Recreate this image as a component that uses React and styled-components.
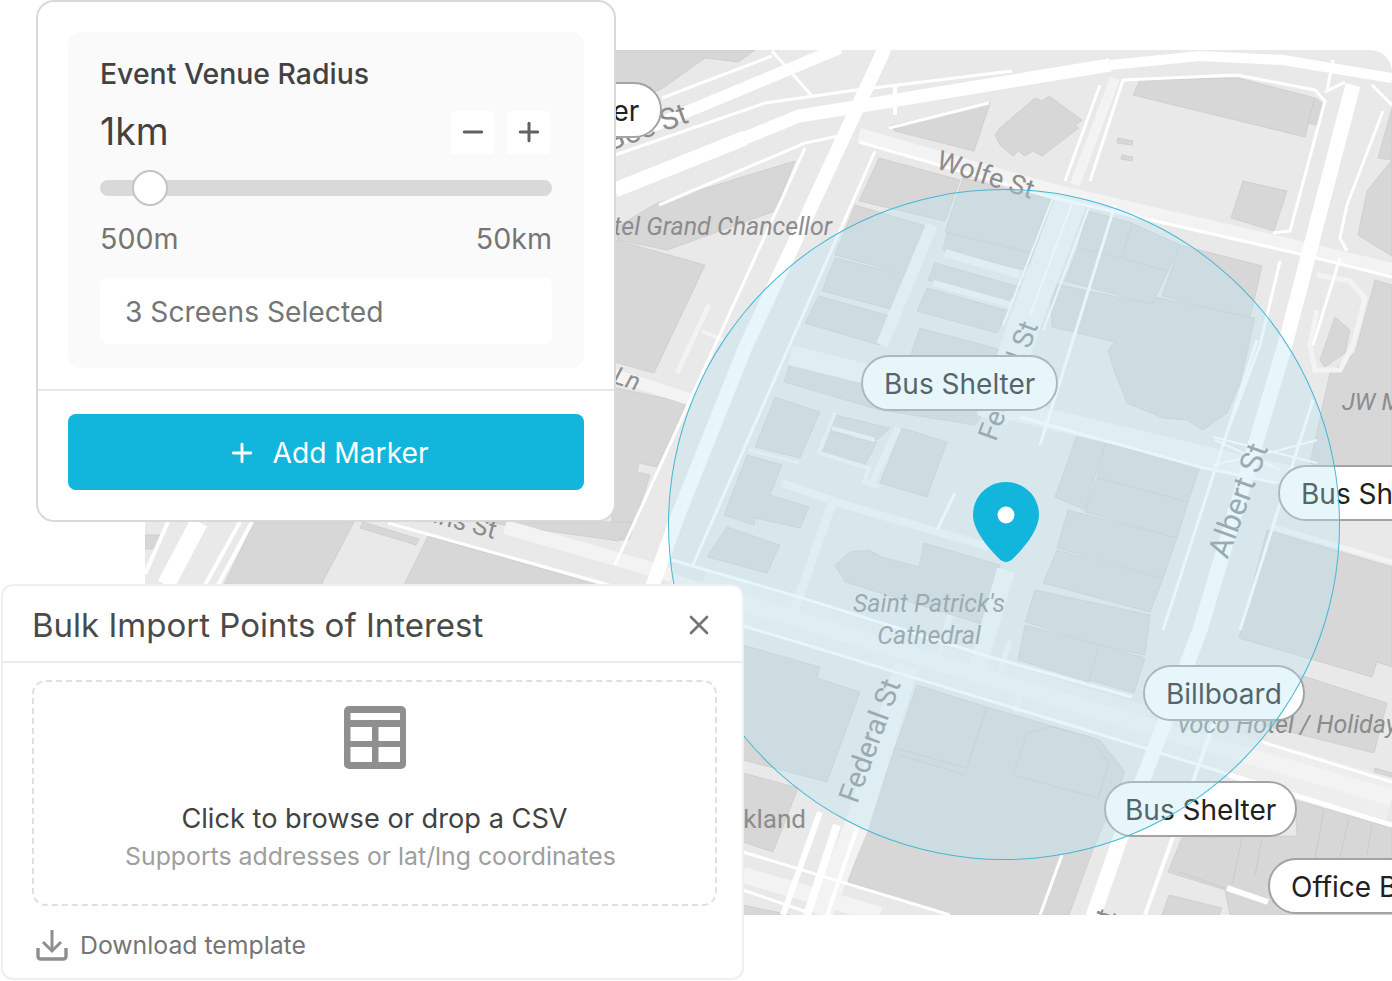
import React from "react";
import styled, { createGlobalStyle } from "styled-components";
import { Plus, Minus, X } from "lucide-react";

const Global = createGlobalStyle`
  html, body { margin: 0; padding: 0; background: #fff; }
  body { font-family: "Inter", "Liberation Sans", sans-serif; overflow: hidden; }
  * { box-sizing: border-box; }
`;

const Stage = styled.div`
  position: relative;
  width: 1392px;
  height: 981px;
  overflow: hidden;
  background: #fff;
`;

const MapImage = styled.svg`
  position: absolute;
  left: 145px;
  top: 50px;
  width: 1247px;
  height: 865px;
  border-top-right-radius: 22px;
`;

const Pill = styled.div`
  position: absolute;
  left: ${(p) => p.$x}px;
  top: ${(p) => p.$y}px;
  height: 56px;
  padding: 2px ${(p) => p.$pad || 21}px 0;
  display: flex;
  align-items: center;
  white-space: nowrap;
  background: #fff;
  border: 2px solid #a3a3a3;
  border-radius: 28px;
  font-size: 28px;
  color: #212121;
`;

const Radius = styled.div`
  position: absolute;
  left: 668px;
  top: 189px;
  width: 672px;
  height: 671px;
  border-radius: 50%;
  border: 1.6px solid #45b8d6;
  background: rgba(184, 229, 243, 0.35);
`;

const PinIcon = styled.svg`
  position: absolute;
  left: 973px;
  top: 482px;
  width: 66px;
  height: 80px;
`;

const VenueCard = styled.section`
  position: absolute;
  left: 36px;
  top: 0;
  width: 580px;
  height: 522px;
  background: #fff;
  border: 2px solid #d9d9d9;
  border-radius: 18px;
  display: flex;
  flex-direction: column;
`;

const VenuePanel = styled.div`
  margin: 30px 30px 0;
  height: 336px;
  padding: 24px 32px 0;
  background: #fafafa;
  border-radius: 12px;
  display: flex;
  flex-direction: column;
`;

const PanelTitle = styled.div`
  font-size: 28.4px;
  line-height: 36px;
  font-weight: 500;
  color: #424242;
`;

const ValueRow = styled.div`
  margin-top: 18px;
  height: 44px;
  display: flex;
  align-items: center;
  justify-content: space-between;
`;

const Value = styled.div`
  font-size: 37.5px;
  line-height: 44px;
  color: #424242;
`;

const Stepper = styled.div`
  display: flex;
  gap: 13px;
  margin-right: 2px;
`;

const StepButton = styled.button`
  width: 43px;
  height: 43px;
  padding: 0;
  border: 0;
  border-radius: 4px;
  background: #fff;
  color: #616161;
  display: flex;
  align-items: center;
  justify-content: center;
`;

const Track = styled.div`
  position: relative;
  margin-top: 26px;
  height: 16px;
  border-radius: 8px;
  background: #d9d9d9;
`;

const Thumb = styled.div`
  position: absolute;
  left: 32px;
  top: -10px;
  width: 36px;
  height: 36px;
  border-radius: 50%;
  background: #fff;
  border: 2px solid #c4c4c4;
`;

const RangeLabels = styled.div`
  margin-top: 25px;
  display: flex;
  justify-content: space-between;
  font-size: 28.6px;
  line-height: 36px;
  color: #757575;
`;

const SelectedBox = styled.div`
  margin-top: 21px;
  height: 66px;
  padding: 2px 0 0 25px;
  display: flex;
  align-items: center;
  background: #fff;
  border-radius: 8px;
  font-size: 28.2px;
  color: #757575;
`;

const VenueFooter = styled.div`
  margin-top: 21px;
  padding: 23px 30px 0;
  border-top: 2px solid #e8e8e8;
`;

const AddButton = styled.button`
  width: 100%;
  height: 76px;
  padding: 2px 0 0 4px;
  border: 0;
  border-radius: 8px;
  background: #12b5db;
  color: #fff;
  font-family: inherit;
  font-size: 28.2px;
  display: flex;
  align-items: center;
  justify-content: center;
  gap: 15px;
`;

const ImportCard = styled.section`
  position: absolute;
  left: 1px;
  top: 584px;
  width: 743px;
  height: 396px;
  background: #fff;
  border: 2px solid #efefef;
  border-radius: 12px;
  display: flex;
  flex-direction: column;
`;

const ImportHeader = styled.header`
  height: 77px;
  padding: 3px 27px 0 29px;
  display: flex;
  align-items: center;
  justify-content: space-between;
  border-bottom: 2px solid #ececec;
  font-size: 33px;
  color: #4a4a4a;
`;

const CloseButton = styled.span`
  display: flex;
  color: #757575;
`;

const DropZone = styled.div`
  margin: 17px 25px 0 29px;
  height: 226px;
  border: 2px dashed #e0e0e0;
  border-radius: 14px;
  padding-top: 24px;
  display: flex;
  flex-direction: column;
  align-items: center;
`;

const DropTitle = styled.div`
  margin-top: 31px;
  font-size: 27.2px;
  line-height: 38px;
  color: #424242;
`;

const DropHint = styled.div`
  font-size: 24.8px;
  line-height: 36px;
  color: #9e9e9e;
  transform: translateX(-4px);
`;

const TemplateLink = styled.div`
  margin: 22px 0 0 33px;
  display: flex;
  align-items: center;
  gap: 12px;
  font-size: 24.8px;
  line-height: 34px;
  color: #757575;
`;

const buildings = [
  "615,50 755,50 738,62 705,58 660,90 615,105",
  "795,161 775,211 667,250 618,240 615,228 657,203",
  "615,240 705,265 654,373 615,362",
  "612,387 687,403 657,467 639,463 637,472 650,475 629,540 612,540",
  "890,126 990,103 974,151 895,131",
  "879,158 960,180 945,221 859,201",
  "855,205 932,228 909,275 835,255",
  "835,258 909,276 895,310 822,291",
  "819,296 890,316 879,345 805,323",
  "963,178 1055,200 1035,253 945,232",
  "947,233 1035,254 1025,270 943,250",
  "935,263 1020,287 1008,302 928,280",
  "927,288 1009,311 997,333 917,311",
  "920,328 1002,350 985,390 908,362",
  "792,357 872,377 985,410 975,425 880,410 784,382",
  "775,397 820,412 800,458 755,447",
  "835,415 890,428 877,440 825,432",
  "825,433 877,442 865,465 820,452",
  "902,428 947,442 927,497 880,483",
  "747,455 782,465 770,495 809,507 800,528 755,518 754,525 724,515",
  "727,527 780,545 767,573 707,557",
  "850,552 869,550 882,557 919,567 924,543 1000,565 985,625 845,582 835,565",
  "1000,128 1035,98 1042,101 1049,96 1082,120 1075,126 1079,128 1042,156 1033,151 1025,156 1018,151 1013,156 1000,145 995,135",
  "1133,95 1140,80 1238,78 1315,98 1305,137",
  "1315,98 1325,105 1318,125 1308,123",
  "1118,138 1133,141 1132,145 1117,143",
  "1122,155 1133,157 1132,161 1121,159",
  "1243,181 1287,191 1274,231 1231,218",
  "1392,108 1378,158 1392,160",
  "1392,160 1367,191 1358,235 1392,256",
  "1375,280 1355,353 1330,373 1310,463 1392,490 1392,285",
  "1335,317 1350,330 1345,353 1325,367 1320,360",
  "1180,245 1262,266 1250,318 1162,296",
  "1088,211 1132,223 1122,258 1078,247",
  "1132,223 1180,245 1168,271 1122,258",
  "1078,248 1168,271 1152,304 1065,281",
  "1050,283 1152,304 1155,297 1255,318 1240,383 1227,413 1203,430 1187,420 1163,418 1127,403 1115,373 1108,350 1115,342 1052,327",
  "1077,435 1105,443 1085,510 1055,497",
  "1105,443 1200,467 1188,502 1097,477",
  "1097,478 1188,502 1177,538 1085,512",
  "1068,510 1177,538 1163,578 1057,548",
  "1057,550 1163,579 1150,612 1043,583",
  "1035,590 1150,615 1145,655 1099,645 1025,622",
  "1025,625 1099,645 1089,682 1018,660",
  "1099,645 1145,658 1134,693 1089,680",
  "1267,530 1392,567 1392,667 1377,662 1372,677 1239,638",
  "1300,675 1387,703 1374,753 1262,725",
  "1375,768 1392,773 1392,790 1370,785",
  "743,645 820,667 817,678 860,692 827,782 743,760",
  "743,773 798,788 773,852 743,842",
  "917,685 987,707 1100,740 1125,772 1092,852 1069,915 950,915 848,882 895,748",
  "1182,838 1297,836 1295,800 1392,828 1392,915 1230,915 1225,890 1168,872",
  "1169,895 1222,908 1219,915 1162,915",
  "743,905 790,915 743,915",
  "254,522 354,522 321,585 224,585",
  "428,536 598,585 404,585",
  "485,522 619,541 633,522",
  "363,522 419,539 416,545 360,528",
  "145,535 162,535 156,549 145,549",
];

// thin walls inside the large blocks
const outlines = [
  "M1027,733 L1052,727 L1090,737 L1109,763 L1098,798 L1013,775 Z",
  "M895,748 L967,768 L987,707",
  "M900,755 L965,775",
  "M1242,838 L1232,885",
  "M1262,838 L1255,875",
  "M1324,810 L1315,858",
  "M1349,818 L1340,857",
  "M1372,825 L1367,855",
  "M1179,872 L1225,888",
];

const bands = [
  { d: "M859,135 L1050,190 L1300,248 L1392,270", w: 14 },
  { d: "M1115,78 L1075,185", w: 10 },
  { d: "M1071,200 L1023,328 L992,420", w: 32 },
  { d: "M932,225 L882,345", w: 12 },
  { d: "M898,428 L872,483", w: 7 },
  { d: "M832,503 L792,617", w: 9 },
  { d: "M1006,570 L977,670", w: 18 },
  { d: "M790,355 L1020,412 L1213,458 L1317,482", w: 20 },
  { d: "M782,483 L839,503 L989,547", w: 8 },
  { d: "M615,375 L692,400", w: 12 },
  { d: "M709,305 L677,373", w: 5 },
  { d: "M702,331 L725,341", w: 4 },
  { d: "M505,527 L672,575", w: 14 },
  { d: "M672,582 L800,620 L1070,703 L1392,798", w: 16 },
  { d: "M907,665 L857,825 L820,915", w: 24 },
  { d: "M743,875 L830,900 L880,915", w: 16 },
  { d: "M1273,527 L1392,562", w: 5 },
  { d: "M945,253 L1020,275", w: 8 },
  { d: "M933,283 L1012,305", w: 6 },
  { d: "M1317,275 L1350,281 L1365,298 L1353,345 L1340,370 L1315,370 L1310,345 L1317,310", w: 5 },
  { d: "M835,412 L819,453 L869,468 L864,482 L879,487", w: 4 },
  { d: "M832,428 L875,440", w: 4 },
  { d: "M749,450 L799,463", w: 3 },
  { d: "M898,428 L872,483", w: 5 },
  { d: "M1010,640 L1000,672", w: 5 },
  { d: "M950,615 L940,655", w: 6 },
  { d: "M1022,690 L1015,712", w: 5 },
];

const whiteRoads = [
  { d: "M600,148 L840,48", w: 12 },
  { d: "M615,190 L745,138", w: 15 },
  { d: "M745,138 L799,116 L849,108 L1000,83 L1110,65", w: 13 },
  { d: "M1110,65 L1200,56 L1283,60 L1392,78", w: 10 },
  { d: "M885,48 L792,248 L745,348 L679,513 L640,620", w: 14 },
  { d: "M1353,85 L1285,345 L1200,630 L1119,842 L1090,925", w: 15 },
  { d: "M1257,340 L1163,630", w: 3 },
  { d: "M1313,400 L1240,630", w: 3 },
  { d: "M168,522 L145,574", w: 4 },
  { d: "M199,522 L166,585", w: 18 },
  { d: "M240,522 L205,585", w: 4 },
  { d: "M252,522 L218,585", w: 4 },
  { d: "M875,151 L692,567", w: 3 },
  { d: "M805,148 L615,565", w: 3 },
  { d: "M615,155 L765,103 L849,91 L1012,71", w: 3 },
  { d: "M662,98 L772,56", w: 3 },
  { d: "M659,205 L805,143 L839,136", w: 3 },
  { d: "M772,51 L812,96", w: 3 },
  { d: "M895,85 L895,115", w: 4 },
  { d: "M889,128 L989,103", w: 3 },
  { d: "M1090,181 L1123,80 L1237,75 L1315,90 L1325,101 L1290,231 L1273,233", w: 3 },
  { d: "M1100,85 L1065,181", w: 3 },
  { d: "M1280,261 L1260,345 L1228,430", w: 3 },
  { d: "M1383,111 L1347,205 L1340,238 L1347,251", w: 3 },
  { d: "M1340,258 L1313,345", w: 3 },
  { d: "M859,142 L1050,197 L1300,254 L1392,277", w: 3 },
  { d: "M1053,198 L1003,325", w: 2 },
  { d: "M1073,201 L1030,315", w: 2 },
  { d: "M1090,205 L1043,331", w: 2 },
  { d: "M1020,417 L1200,467 L1277,483", w: 3 },
  { d: "M1213,437 L1317,463", w: 2 },
  { d: "M1213,465 L1280,450 L1317,440", w: 2 },
  { d: "M1215,440 L1280,470", w: 2 },
  { d: "M388,523 L602,583 L1070,725 L1392,825", w: 3 },
  { d: "M672,560 L799,597 L990,657 L1132,697", w: 3 },
  { d: "M1229,775 L1392,825", w: 5 },
  { d: "M1262,742 L1392,782", w: 3 },
  { d: "M743,852 L950,915", w: 3 },
  { d: "M743,890 L807,912", w: 3 },
  { d: "M1227,888 L1268,902", w: 6 },
  { d: "M1145,915 L1215,720", w: 4 },
  { d: "M1062,855 L1040,915", w: 3 },
  { d: "M820,812 L783,915", w: 6 },
  { d: "M837,825 L807,915", w: 8 },
  { d: "M857,828 L827,915", w: 4 },
  { d: "M1115,205 L1062,375 L1040,445", w: 3 },
  { d: "M937,530 L955,493", w: 3 },
  { d: "M1333,60 L1327,91", w: 3 },
  { d: "M1325,92 L1345,82", w: 3 },
  { d: "M1372,85 L1392,105", w: 3 },
];

const labels = [
  { text: "Wolfe St", x: 935, y: 168, size: 27, rotate: 18 },
  { text: "Hotel Grand Chancellor", x: 832, y: 235, size: 25, anchor: "end", italic: true },
  { text: "Federal St", x: 1017, y: 384, size: 28, rotate: -70, anchor: "middle" },
  { text: "Federal St", x: 879, y: 744, size: 29, rotate: -70, anchor: "middle" },
  { text: "Albert St", x: 1248, y: 504, size: 31, rotate: -70, anchor: "middle" },
  { text: "Saint Patrick's", x: 929, y: 612, size: 25, anchor: "middle", italic: true },
  { text: "Cathedral", x: 929, y: 644, size: 25, anchor: "middle", italic: true },
  { text: "Flinders Ln", x: 637, y: 391, size: 25, rotate: 18, anchor: "end", italic: true },
  { text: "Gee St", x: 690, y: 122, size: 30, rotate: -20, anchor: "end" },
  { text: "Collins St", x: 494, y: 539, size: 26, rotate: 15, anchor: "end" },
  { text: "Auckland", x: 806, y: 828, size: 26, anchor: "end" },
  { text: "JW Marriott", x: 1342, y: 410, size: 24, italic: true },
  { text: "voco Hotel / Holiday Inn", x: 1178, y: 733, size: 25, italic: true },
  { text: "St", x: 1112, y: 925, size: 28, rotate: -72, anchor: "middle" },
];

function MapArt() {
  return (
    <MapImage viewBox="145 50 1247 865" aria-hidden="true">
      <rect x="145" y="50" width="1247" height="865" fill="#e9e9e9" />
      {buildings.map((pts) => (
        <polygon key={pts} points={pts} fill="#d7d7d7" stroke="#c9c9c9" strokeWidth="0.7" />
      ))}
      {outlines.map((d) => (
        <path key={d} d={d} fill="none" stroke="#c6c6c6" strokeWidth="0.8" />
      ))}
      <path d="M700,590 L800,622 L1070,705 L1392,800" fill="none" stroke="#eeeeee" strokeWidth="42" />
      {bands.map((r) => (
        <path key={r.d + r.w} d={r.d} fill="none" stroke="#f3f3f3" strokeWidth={r.w} />
      ))}
      {whiteRoads.map((r) => (
        <path key={r.d} d={r.d} fill="none" stroke="#fff" strokeWidth={r.w} strokeLinejoin="round" />
      ))}
      {labels.map((l) => (
        <text
          key={l.text + l.x}
          x={l.x}
          y={l.y}
          fontFamily="Roboto, 'Liberation Sans', sans-serif"
          fontSize={l.size}
          fontStyle={l.italic ? "italic" : "normal"}
          fill="#8c8c8c"
          textAnchor={l.anchor || "start"}
          transform={l.rotate ? `rotate(${l.rotate} ${l.x} ${l.y})` : undefined}
        >
          {l.text}
        </text>
      ))}
    </MapImage>
  );
}

function TableIcon() {
  return (
    <svg width="62" height="63" viewBox="0 0 62 63" aria-hidden="true">
      <rect width="62" height="63" rx="5" fill="#8f8f8f" />
      <rect x="6.5" y="7" width="49.5" height="7" fill="#fff" />
      <rect x="6.5" y="21" width="21.5" height="14" fill="#fff" />
      <rect x="34.5" y="21" width="21.5" height="14" fill="#fff" />
      <rect x="6.5" y="41" width="21.5" height="15" fill="#fff" />
      <rect x="34.5" y="41" width="21.5" height="15" fill="#fff" />
    </svg>
  );
}

function DownloadIcon() {
  return (
    <svg width="32" height="31" viewBox="0 0 32 31" fill="none" stroke="#8f8f8f" aria-hidden="true">
      <path d="M16 0 V19" strokeWidth="3" />
      <path d="M7 12 L16 21 L25 12" strokeWidth="3" />
      <path d="M2 18 V26 Q2 29 5 29 H27 Q30 29 30 26 V18" strokeWidth="3.4" />
    </svg>
  );
}

export default function App() {
  return (
    <Stage>
      <Global />
      <MapArt />
      <Pill $x={465} $y={82}>Bus Shelter</Pill>
      <Pill $x={861} $y={355}>Bus Shelter</Pill>
      <Pill $x={1278} $y={465}>Bus Shelter</Pill>
      <Pill $x={1143} $y={665}>Billboard</Pill>
      <Pill $x={1104} $y={781} $pad={19}>Bus Shelter</Pill>
      <Pill $x={1268} $y={858}>Office Block</Pill>
      <Radius />
      <PinIcon viewBox="0 0 66 80" aria-hidden="true">
        <path
          d="M33 0 C51.5 0 66 14.5 66 33 C66 47 53 64 39 77.5 C35.5 80.8 30.5 80.8 27 77.5 C13 64 0 47 0 33 C0 14.5 14.5 0 33 0 Z"
          fill="#12b5db"
        />
        <circle cx="33" cy="33" r="8.5" fill="#fff" />
      </PinIcon>

      <VenueCard>
        <VenuePanel>
          <PanelTitle>Event Venue Radius</PanelTitle>
          <ValueRow>
            <Value>1km</Value>
            <Stepper>
              <StepButton aria-label="Decrease"><Minus size={30} strokeWidth={2.4} /></StepButton>
              <StepButton aria-label="Increase"><Plus size={30} strokeWidth={2.4} /></StepButton>
            </Stepper>
          </ValueRow>
          <Track>
            <Thumb />
          </Track>
          <RangeLabels>
            <span>500m</span>
            <span>50km</span>
          </RangeLabels>
          <SelectedBox>3 Screens Selected</SelectedBox>
        </VenuePanel>
        <VenueFooter>
          <AddButton>
            <Plus size={30} strokeWidth={2.3} />
            Add Marker
          </AddButton>
        </VenueFooter>
      </VenueCard>

      <ImportCard>
        <ImportHeader>
          <span>Bulk Import Points of Interest</span>
          <CloseButton><X size={32} strokeWidth={2} /></CloseButton>
        </ImportHeader>
        <DropZone>
          <TableIcon />
          <DropTitle>Click to browse or drop a CSV</DropTitle>
          <DropHint>Supports addresses or lat/lng coordinates</DropHint>
        </DropZone>
        <TemplateLink>
          <DownloadIcon />
          Download template
        </TemplateLink>
      </ImportCard>
    </Stage>
  );
}
